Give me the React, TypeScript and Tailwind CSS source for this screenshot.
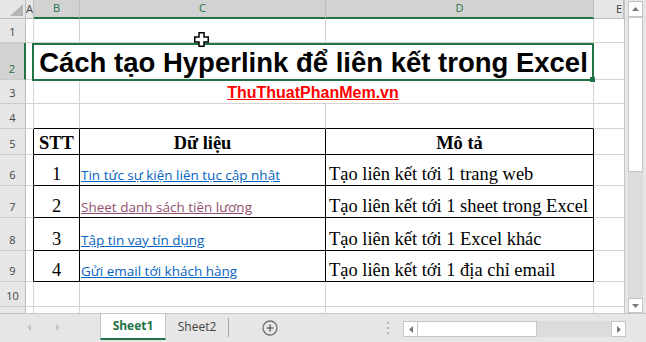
import React from 'react';

const GRID = 'border-r-[#d4d4d4] border-b-[#d4d4d4]';
const BLACK = 'border-r-black border-b-black';
const TIMES = "font-['Liberation_Serif',serif] text-[18.45px] leading-[1.15]";
const LINK = "font-['Open_Sans',sans-serif] text-[13.5px] underline";

function RowHead({ n, sel }: { n?: number; sel?: boolean }) {
  return (
    <div
      className={`w-[26px] shrink-0 h-full flex items-end justify-center pb-[2px] border-b border-b-[#cbcbcb] text-[11px] ${
        sel
          ? 'bg-[#d2d2d2] text-[#217346] border-r-2 border-r-[#217346]'
          : 'bg-[#e6e6e6] text-[#444] border-r border-r-[#bdbdbd]'
      }`}
    >
      {n}
    </div>
  );
}

function Cell({
  w,
  b = GRID,
  className = '',
  children,
}: {
  w: string;
  b?: string;
  className?: string;
  children?: React.ReactNode;
}) {
  return (
    <div className={`${w} shrink-0 h-full border-r border-b ${b} flex items-end overflow-hidden whitespace-nowrap ${className}`}>
      {children}
    </div>
  );
}

function Row({ h, n, sel, children }: { h: string; n?: number; sel?: boolean; children?: React.ReactNode }) {
  return (
    <div className={`flex shrink-0 ${h}`}>
      <RowHead n={n} sel={sel} />
      {children}
    </div>
  );
}

function ColHead({ w, label, sel, className = 'justify-center' }: { w: string; label: string; sel?: boolean; className?: string }) {
  return (
    <div
      className={`${w} shrink-0 h-full flex items-center overflow-hidden text-[11px] border-r border-r-[#bdbdbd] ${className} ${
        sel ? 'bg-[#d2d2d2] text-[#217346] border-b-2 border-b-[#217346]' : 'bg-[#e6e6e6] text-[#444] border-b border-b-[#bdbdbd]'
      }`}
    >
      {label}
    </div>
  );
}

const rows = [
  { n: 1, stt: '1', link: 'Tin tức sự kiện liên tục cập nhật', color: 'text-[#0563c1]', desc: 'Tạo liên kết tới 1 trang web', h: 'h-[31px]' },
  { n: 2, stt: '2', link: 'Sheet danh sách tiền lương', color: 'text-[#954f72]', desc: 'Tạo liên kết tới 1 sheet trong Excel', h: 'h-[32px]' },
  { n: 3, stt: '3', link: 'Tập tin vay tín dụng', color: 'text-[#0563c1]', desc: 'Tạo liên kết tới 1 Excel khác', h: 'h-[33px]' },
  { n: 4, stt: '4', link: 'Gửi email tới khách hàng', color: 'text-[#0563c1]', desc: 'Tạo liên kết tới 1 địa chỉ email', h: 'h-[31px]' },
];

function VScroll() {
  return (
    <div className="w-[22px] shrink-0 h-full border-l border-[#c6c6c6] bg-[#e6e6e6] flex flex-col pl-[3px] pr-[3px]">
      <div className="mt-[1px] h-[16px] bg-white border border-[#c6c6c6] flex items-center justify-center">
        <svg width="7" height="4" viewBox="0 0 7 4"><polygon points="0,4 7,4 3.5,0" fill="#7a7a7a" /></svg>
      </div>
      <div className="h-[155px] bg-white border border-[#c6c6c6]" />
      <div className="flex-1 bg-[#dcdcdc]" />
      <div className="h-[15px] bg-white border border-[#c6c6c6] flex items-center justify-center">
        <svg width="7" height="4" viewBox="0 0 7 4"><polygon points="0,0 7,0 3.5,4" fill="#7a7a7a" /></svg>
      </div>
    </div>
  );
}

function TabBar() {
  return (
    <div className="h-[29px] shrink-0 bg-[#e6e6e6] border-t border-[#c6c6c6] flex items-start text-[12px] font-['Open_Sans',sans-serif]">
      <div className="w-[100px] shrink-0 h-full flex items-center pl-[27px] gap-[25px] pb-[1px]">
        <svg width="4" height="7" viewBox="0 0 4 7"><polygon points="4,0 4,7 0,3.5" fill="#c2c2c2" /></svg>
        <svg width="4" height="7" viewBox="0 0 4 7"><polygon points="0,0 0,7 4,3.5" fill="#c2c2c2" /></svg>
      </div>
      <div className="w-[66px] shrink-0 h-[26px] bg-white border-x border-[#c6c6c6] border-b-2 border-b-[#217346] flex items-center justify-center font-bold text-[#217346]">
        Sheet1
      </div>
      <div className="w-[62px] shrink-0 h-[26px] flex items-center justify-center text-[#444]">Sheet2</div>
      <div className="w-px h-[19px] bg-[#a6a6a6] mt-[4px] shrink-0" />
      <div className="ml-[33px] mt-[6px] shrink-0">
        <svg width="16" height="16" viewBox="0 0 16 16">
          <circle cx="8" cy="8" r="7" fill="none" stroke="#707070" strokeWidth="1.3" />
          <path d="M8 4.5v7M4.5 8h7" stroke="#707070" strokeWidth="1.6" />
        </svg>
      </div>
      <div className="ml-[109px] mt-[8px] shrink-0">
        <svg width="2" height="14" viewBox="0 0 2 14">
          <rect x="0" y="0" width="2" height="2" fill="#b5b5b5" />
          <rect x="0" y="5" width="2" height="2" fill="#b5b5b5" />
          <rect x="0" y="10" width="2" height="2" fill="#b5b5b5" />
        </svg>
      </div>
      <div className="ml-[14px] mt-[7px] h-[16px] flex shrink-0">
        <div className="w-[15px] bg-white border border-[#c6c6c6] flex items-center justify-center">
          <svg width="4" height="7" viewBox="0 0 4 7"><polygon points="4,0 4,7 0,3.5" fill="#7a7a7a" /></svg>
        </div>
        <div className="w-[119px] bg-white border-y border-r border-[#c6c6c6]" />
        <div className="w-[74px] bg-[#dcdcdc]" />
        <div className="w-[15px] bg-white border border-[#c6c6c6] flex items-center justify-center">
          <svg width="4" height="7" viewBox="0 0 4 7"><polygon points="0,0 0,7 4,3.5" fill="#7a7a7a" /></svg>
        </div>
      </div>
    </div>
  );
}

export default function App() {
  return (
    <div className="relative w-[646px] h-[342px] bg-white overflow-hidden flex flex-col font-['Open_Sans',sans-serif]">
      <div className="flex h-[313px] shrink-0">
        <div className="w-[624px] shrink-0 overflow-hidden flex flex-col">
          {/* column headers */}
          <div className="flex h-[19px] shrink-0">
            <div className="w-[26px] shrink-0 h-full bg-[#e6e6e6] border-r border-b border-[#bdbdbd]">
              <svg width="25" height="18" viewBox="0 0 25 18">
                <polygon points="10,16 23,16 23,4" fill="#b4b4b4" />
              </svg>
            </div>
            <ColHead w="w-[8px]" label="A" />
            <ColHead w="w-[46px]" label="B" sel />
            <ColHead w="w-[246px]" label="C" sel />
            <ColHead w="w-[268px]" label="D" sel />
            <ColHead w="w-[30px]" label="E" className="justify-end pr-[1px]" />
          </div>

          <Row h="h-[24px]" n={1}>
            <Cell w="w-[8px]" />
            <Cell w="w-[46px]" />
            <Cell w="w-[246px]" />
            <Cell w="w-[268px]" />
            <Cell w="w-[64px]" />
          </Row>

          <Row h="h-[37px]" n={2} sel>
            <Cell w="w-[8px]" />
            <div className="relative w-[560px] shrink-0 h-full border-r border-b border-[#d4d4d4] flex items-end justify-center whitespace-nowrap">
              <span className="font-['Liberation_Sans',Arial,sans-serif] font-bold text-[27.5px] leading-[1.15] text-black">
                Cách tạo Hyperlink để liên kết trong Excel
              </span>
              <div className="absolute left-[-2px] top-0 w-[562px] h-[38px] border-2 border-[#217346]">
                <div className="absolute left-[556px] top-[32px] w-[5px] h-[5px] bg-[#217346]" />
              </div>
            </div>
            <Cell w="w-[64px]" />
          </Row>

          <Row h="h-[24px]" n={3}>
            <Cell w="w-[8px]" />
            <Cell w="w-[46px]" />
            <Cell w="w-[514px]" className="justify-center pr-[47px] pb-[1px]">
              <span className="font-['Liberation_Sans',Arial,sans-serif] font-bold text-[16px] leading-[1.15] text-[#ff0000] underline">
                ThuThuatPhanMem.vn
              </span>
            </Cell>
            <Cell w="w-[64px]" />
          </Row>

          <Row h="h-[25px]" n={4}>
            <Cell w="w-[8px]" />
            <Cell w="w-[46px]" b="border-r-[#d4d4d4] border-b-black" />
            <Cell w="w-[246px]" b="border-r-[#d4d4d4] border-b-black" />
            <Cell w="w-[268px]" b="border-r-[#d4d4d4] border-b-black" />
            <Cell w="w-[64px]" />
          </Row>

          <Row h="h-[26px]" n={5}>
            <Cell w="w-[8px]" b="border-r-black border-b-[#d4d4d4]" />
            <Cell w="w-[46px]" b={BLACK} className={`${TIMES} font-bold justify-center`}>STT</Cell>
            <Cell w="w-[246px]" b={BLACK} className={`${TIMES} font-bold justify-center`}>Dữ liệu</Cell>
            <Cell w="w-[268px]" b={BLACK} className={`${TIMES} font-bold justify-center`}>Mô tả</Cell>
            <Cell w="w-[64px]" />
          </Row>

          {rows.map((r, i) => (
            <Row key={r.n} h={r.h} n={6 + i}>
              <Cell w="w-[8px]" b="border-r-black border-b-[#d4d4d4]" />
              <Cell w="w-[46px]" b={BLACK} className={`${TIMES} justify-center`}>{r.stt}</Cell>
              <Cell w="w-[246px]" b={BLACK} className={`${LINK} ${r.color} pl-[1px]`}>{r.link}</Cell>
              <Cell w="w-[268px]" b={BLACK} className={`${TIMES} pl-[3px]`}>{r.desc}</Cell>
              <Cell w="w-[64px]" />
            </Row>
          ))}

          <Row h="h-[25px]" n={10}>
            <Cell w="w-[8px]" />
            <Cell w="w-[46px]" />
            <Cell w="w-[246px]" />
            <Cell w="w-[268px]" />
            <Cell w="w-[64px]" />
          </Row>
          {/* row 11 only peeks in below row 10 */}
          <Row h="h-[25px]">
            <Cell w="w-[8px]" />
            <Cell w="w-[46px]" />
            <Cell w="w-[246px]" />
            <Cell w="w-[268px]" />
            <Cell w="w-[64px]" />
          </Row>
        </div>
        <VScroll />
      </div>
      <TabBar />

      {/* mouse cursor */}
      <svg className="absolute left-[194px] top-[32px]" width="15" height="15" viewBox="0 0 15 15">
        <path d="M5 .75h5v4.25h4.25v5H10v4.25H5V10H.75V5H5z" fill="#fff" stroke="#000" strokeWidth="1.5" />
      </svg>
    </div>
  );
}
